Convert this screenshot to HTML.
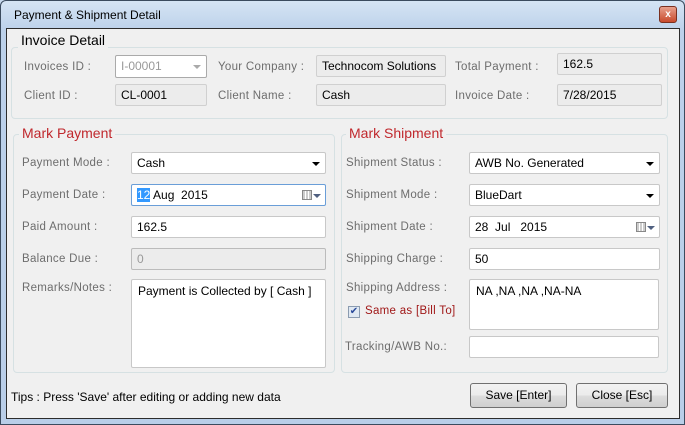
<!DOCTYPE html>
<html><head><style>
*{margin:0;padding:0;box-sizing:border-box}
body{width:685px;height:425px;overflow:hidden;background:#c7d9ee;font-family:"Liberation Sans",sans-serif;font-size:12px;position:relative}
.a{position:absolute;white-space:nowrap}
.frame{left:0;top:0;width:685px;height:425px;background:linear-gradient(180deg,#d5e4f4,#bcd1ea 30px,#b9cee8);border:1px solid #3b4b5e;border-radius:6px 6px 0 0}
.inner{left:6px;top:28px;width:674px;height:391px;background:#f0f0f0;border:1px solid #2c2c2c}
.lbl{color:#6d6d6d;font-size:11.5px;letter-spacing:0.3px}
.box{position:absolute;background:#fff;border:1px solid #c8c8c8;border-radius:2px;padding:3px 5px;font-size:12px;color:#000}
.ro{background:#ececec;border-color:#d0d0d0}
.grp{position:absolute;border:1px solid #d6e1e3;border-radius:4px}
.gt{position:absolute;background:#f0f0f0;padding:0 3px;font-size:14px}
.dd{position:absolute;right:5px;top:9px;width:0;height:0;border-left:4px solid transparent;border-right:4px solid transparent;border-top:4px solid #000}
.cal{position:absolute;right:13px;top:5px;width:10px;height:10px;border:1px solid #888;background:repeating-linear-gradient(90deg,#ccc 0 2px,#fff 2px 3px)}
.cdd{position:absolute;right:4px;top:9px;border-left:4px solid transparent;border-right:4px solid transparent;border-top:4px solid #506080}
.btn{position:absolute;border:1px solid #707070;border-radius:3px;background:linear-gradient(#f2f2f2,#ebebeb 50%,#dddddd 50%,#cfcfcf);text-align:center;line-height:22px;font-size:12px}
</style></head><body>
<div class="a frame"></div>
<div class="a" style="left:14px;top:8px;font-size:12px;color:#000">Payment &amp; Shipment Detail</div>
<div class="a" style="left:659px;top:6px;width:18px;height:17px;background:linear-gradient(#e8a08c,#c84a2c);border:1px solid #7a3020;border-radius:3px;color:#fff;font-size:10px;text-align:center;line-height:15px;font-weight:bold">x</div>
<div class="a inner"></div>

<div class="grp" style="left:11px;top:47px;width:657px;height:72px"></div>
<div class="gt" style="left:18px;top:32px;color:#000">Invoice Detail</div>
<div class="a lbl" style="left:24px;top:61px">Invoices ID :</div>
<div class="box" style="left:115px;top:55px;width:92px;height:23px;color:#999;border-color:#aaa">I-00001<div class="dd" style="border-top-color:#aaa"></div></div>
<div class="a lbl" style="left:218px;top:61px">Your Company :</div>
<div class="box ro" style="left:316px;top:55px;width:130px;height:22px">Technocom Solutions</div>
<div class="a lbl" style="left:455px;top:61px">Total Payment :</div>
<div class="box ro" style="left:557px;top:53px;width:105px;height:22px">162.5</div>
<div class="a lbl" style="left:24px;top:90px">Client ID :</div>
<div class="box ro" style="left:115px;top:84px;width:92px;height:22px">CL-0001</div>
<div class="a lbl" style="left:218px;top:90px">Client Name :</div>
<div class="box ro" style="left:316px;top:84px;width:130px;height:22px">Cash</div>
<div class="a lbl" style="left:455px;top:90px">Invoice Date :</div>
<div class="box ro" style="left:557px;top:84px;width:105px;height:22px">7/28/2015</div>

<div class="grp" style="left:13px;top:134px;width:322px;height:239px"></div>
<div class="gt" style="left:19px;top:125px;color:#c0282d">Mark Payment</div>
<div class="a lbl" style="left:22px;top:157px">Payment Mode :</div>
<div class="box" style="left:131px;top:152px;width:195px;height:22px">Cash<div class="dd"></div></div>
<div class="a lbl" style="left:22px;top:189px">Payment Date :</div>
<div class="box" style="left:131px;top:184px;width:195px;height:22px;border-color:#6a9ed8"><span style="background:#3399ff;color:#fff">12</span> Aug&nbsp; 2015<div class="cal"></div><div class="cdd"></div></div>
<div class="a lbl" style="left:22px;top:221px">Paid Amount :</div>
<div class="box" style="left:131px;top:216px;width:195px;height:22px">162.5</div>
<div class="a lbl" style="left:22px;top:253px">Balance Due :</div>
<div class="box ro" style="left:131px;top:248px;width:195px;height:22px;color:#999;border-color:#bbb">0</div>
<div class="a lbl" style="left:22px;top:282px">Remarks/Notes :</div>
<div class="box" style="left:131px;top:279px;width:195px;height:89px;padding:4px 6px">Payment is Collected by [ Cash ]</div>

<div class="grp" style="left:341px;top:134px;width:327px;height:239px"></div>
<div class="gt" style="left:346px;top:125px;color:#c0282d">Mark Shipment</div>
<div class="a lbl" style="left:346px;top:157px">Shipment Status :</div>
<div class="box" style="left:469px;top:152px;width:191px;height:22px">AWB No. Generated<div class="dd"></div></div>
<div class="a lbl" style="left:346px;top:189px">Shipment Mode :</div>
<div class="box" style="left:469px;top:184px;width:191px;height:22px">BlueDart<div class="dd"></div></div>
<div class="a lbl" style="left:346px;top:221px">Shipment Date :</div>
<div class="box" style="left:469px;top:216px;width:191px;height:22px">28&nbsp; Jul&nbsp;&nbsp; 2015<div class="cal"></div><div class="cdd"></div></div>
<div class="a lbl" style="left:346px;top:253px">Shipping Charge :</div>
<div class="box" style="left:469px;top:248px;width:191px;height:22px">50</div>
<div class="a lbl" style="left:346px;top:282px">Shipping Address :</div>
<div class="box" style="left:469px;top:279px;width:190px;height:51px;padding:4px 6px">NA ,NA ,NA ,NA-NA</div>
<div class="a" style="left:348px;top:306px;width:12px;height:12px;border:1px solid #8a9bb0;background:#dfe8f2;color:#2a4a9a;font-size:10px;line-height:10px;text-align:center">✔</div>
<div class="a" style="left:365px;top:305px;color:#a01818;font-size:11.5px;letter-spacing:0.3px">Same as [Bill To]</div>
<div class="a lbl" style="left:345px;top:341px">Tracking/AWB No.:</div>
<div class="box" style="left:469px;top:336px;width:190px;height:22px"></div>

<div class="a" style="left:11px;top:390px;font-size:12px">Tips : Press 'Save' after editing or adding new data</div>
<div class="btn" style="left:470px;top:383px;width:97px;height:25px">Save [Enter]</div>
<div class="btn" style="left:576px;top:383px;width:92px;height:25px">Close [Esc]</div>
</body></html>
